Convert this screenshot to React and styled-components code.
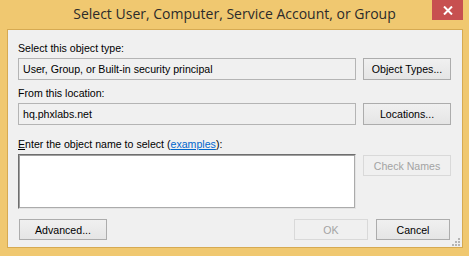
import React from 'react'
import styled, {createGlobalStyle} from 'styled-components'

const GlobalStyle = createGlobalStyle`
    html, body {
        margin: 0;
        padding: 0;
        background: #f0c870;
    }
`

const Window = styled.div`
    width: 469px;
    height: 256px;
    box-sizing: border-box;
    background: #f0c870;
    display: flex;
    flex-direction: column;
    padding: 0 6px 8px 7px;
    font-family: "Liberation Sans", Arial, sans-serif;
`

const TitleBar = styled.div`
    height: 29px;
    flex: none;
    display: flex;
    align-items: flex-start;
    margin: 0 -6px 0 -7px;
    padding: 0 6px 0 37px;
`

const Title = styled.div`
    flex: 1;
    text-align: center;
    font-family: "Open Sans", "Noto Sans", sans-serif;
    font-size: 14px;
    color: #2b2b2b;
    line-height: 20px;
    padding-top: 4px;
`

const CloseButton = styled.div`
    width: 31px;
    height: 20px;
    background: #c75050;
    display: flex;
    align-items: center;
    justify-content: center;
`

const Client = styled.div`
    flex: 1;
    position: relative;
    box-sizing: border-box;
    border: 1px solid #d6aa52;
    background: #f0f0f0;
    padding: 12px 11px 0 10px;
    display: flex;
    flex-direction: column;
    font-size: 10.6px;
    color: #000;
`

const Label = styled.div`
    height: 13px;
    line-height: 13px;
    margin-top: ${p => p.$top || 0}px;
    margin-bottom: 3px;
    white-space: nowrap;
`

const Key = styled.span`
    text-decoration: underline;
`

const Link = styled.span`
    color: #0066cc;
    text-decoration: underline;
`

const Row = styled.div`
    display: flex;
    align-items: ${p => p.$align || 'center'};
    gap: 7px;
`

const Field = styled.div`
    flex: 1;
    height: 22px;
    box-sizing: border-box;
    border: 1px solid #b4b4b4;
    background: #f0f0f0;
    padding: 0 4px;
    line-height: 20px;
    white-space: nowrap;
`

const TextArea = styled.div`
    flex: 1;
    height: 55px;
    box-sizing: border-box;
    background: #fff;
    border-style: solid;
    border-width: 1px;
    border-color: #6e6e6e #e3e3e3 #e3e3e3 #6e6e6e;
    box-shadow: inset 1px 1px 0 #a0a0a0, inset -1px -1px 0 #ababab;
`

const Button = styled.div`
    width: ${p => p.$w || 88}px;
    height: ${p => p.$h || 21}px;
    margin-top: ${p => p.$top || 0}px;
    margin-left: ${p => p.$left || 0}px;
    box-sizing: border-box;
    flex: none;
    display: flex;
    align-items: center;
    justify-content: center;
    border: 1px solid ${p => (p.$disabled ? '#d9d9d9' : '#acacac')};
    background: ${p => (p.$disabled ? '#f0f0f0' : 'linear-gradient(#f0f0f0, #e5e5e5)')};
    color: ${p => (p.$disabled ? '#a3a3a3' : '#000')};
    white-space: nowrap;
`

const Footer = styled.div`
    display: flex;
    align-items: center;
    gap: 8px;
    margin-top: 10px;
    margin-right: 1px;
`

const Spacer = styled.div`
    flex: 1;
`

const Grip = styled.svg`
    position: absolute;
    right: 2px;
    bottom: 1px;
`

export default function App() {
    return (
        <Window>
            <GlobalStyle />
            <TitleBar>
                <Title>Select User, Computer, Service Account, or Group</Title>
                <CloseButton>
                    <svg width="10" height="9" viewBox="0 0 10 9">
                        <path d="M1 0.5 L9 8.5 M9 0.5 L1 8.5" stroke="#fff" strokeWidth="2" />
                    </svg>
                </CloseButton>
            </TitleBar>
            <Client>
                <Label>Select this object type:</Label>
                <Row>
                    <Field>User, Group, or Built-in security principal</Field>
                    <Button $h={22}>Object Types...</Button>
                </Row>
                <Label $top={7}>From this location:</Label>
                <Row>
                    <Field>hq.phxlabs.net</Field>
                    <Button $h={22}>Locations...</Button>
                </Row>
                <Label $top={13}><Key>E</Key>nter the object name to select (<Link>examples</Link>):</Label>
                <Row $align="flex-start">
                    <TextArea />
                    <Button $top={1} $disabled>Check Names</Button>
                </Row>
                <Footer>
                    <Button $left={1}>Advanced...</Button>
                    <Spacer />
                    <Button $w={74} $disabled>OK</Button>
                    <Button $w={74}>Cancel</Button>
                </Footer>
                <Grip width="8" height="8" viewBox="0 0 8 8">
                    <rect x="6" y="0" width="2" height="2" fill="#b5b5b5" />
                    <rect x="3" y="3" width="2" height="2" fill="#b5b5b5" />
                    <rect x="6" y="3" width="2" height="2" fill="#b5b5b5" />
                    <rect x="0" y="6" width="2" height="2" fill="#b5b5b5" />
                    <rect x="3" y="6" width="2" height="2" fill="#b5b5b5" />
                    <rect x="6" y="6" width="2" height="2" fill="#b5b5b5" />
                </Grip>
            </Client>
        </Window>
    )
}
